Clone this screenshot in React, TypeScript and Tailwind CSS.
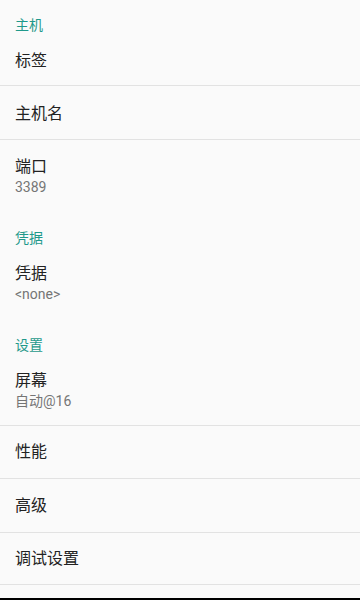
import React from "react";

const font = { fontFamily: 'Roboto, "Noto Sans CJK SC", sans-serif' };

function Header({ text }: { text: string }) {
  return (
    <div className="h-[40px] pt-[17px] px-[15px] text-[14px] leading-[16px] text-[#1f998b]">
      {text}
    </div>
  );
}

function Divider() {
  return <div className="h-px w-full bg-[#e2e2e2]" />;
}

function Single({ text, h }: { text: string; h: string }) {
  return (
    <div className={`${h} flex items-center px-[15px] text-[16px] leading-[20px] text-[#222222]`}>
      {text}
    </div>
  );
}

export default function App() {
  return (
    <div className="w-[360px] h-[600px] bg-[#fafafa] flex flex-col overflow-hidden" style={font}>
      <Header text="主机" />
      <div className="h-[45px] pt-[11px] px-[15px] text-[16px] leading-[20px] text-[#222222]">标签</div>
      <Divider />
      <div className="h-[53px] pt-[18px] px-[15px] text-[16px] leading-[20px] text-[#222222]">主机名</div>
      <Divider />
      <div className="h-[73px] pt-[17px] px-[15px] flex flex-col">
        <div className="text-[16px] leading-[20px] text-[#222222]">端口</div>
        <div className="text-[14px] leading-[20px] text-[#757575]">3389</div>
      </div>
      <Header text="凭据" />
      <div className="h-[67px] pt-[11px] px-[15px] flex flex-col">
        <div className="text-[16px] leading-[20px] text-[#222222]">凭据</div>
        <div className="text-[14px] leading-[20px] text-[#757575]">&lt;none&gt;</div>
      </div>
      <Header text="设置" />
      <div className="h-[65px] pt-[11px] px-[15px] flex flex-col">
        <div className="text-[16px] leading-[20px] text-[#222222]">屏幕</div>
        <div className="text-[14px] leading-[20px] text-[#757575]">自动@16</div>
      </div>
      <Divider />
      <Single text="性能" h="h-[52px]" />
      <Divider />
      <Single text="高级" h="h-[53px]" />
      <Divider />
      <Single text="调试设置" h="h-[51px]" />
      <Divider />
      <div className="flex-1" />
      <div className="h-[2px] bg-black" />
    </div>
  );
}
